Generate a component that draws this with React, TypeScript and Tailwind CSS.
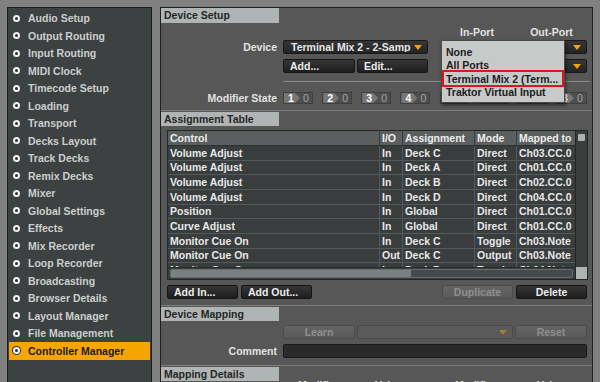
import React from "react";

const sideItems = [
  "Audio Setup",
  "Output Routing",
  "Input Routing",
  "MIDI Clock",
  "Timecode Setup",
  "Loading",
  "Transport",
  "Decks Layout",
  "Track Decks",
  "Remix Decks",
  "Mixer",
  "Global Settings",
  "Effects",
  "Mix Recorder",
  "Loop Recorder",
  "Broadcasting",
  "Browser Details",
  "Layout Manager",
  "File Management",
  "Controller Manager",
];

const rows = [
  ["Volume Adjust", "In", "Deck C", "Direct", "Ch03.CC.0"],
  ["Volume Adjust", "In", "Deck A", "Direct", "Ch01.CC.0"],
  ["Volume Adjust", "In", "Deck B", "Direct", "Ch02.CC.0"],
  ["Volume Adjust", "In", "Deck D", "Direct", "Ch04.CC.0"],
  ["Position", "In", "Global", "Direct", "Ch01.CC.0"],
  ["Curve Adjust", "In", "Global", "Direct", "Ch01.CC.0"],
  ["Monitor Cue On", "In", "Deck C", "Toggle", "Ch03.Note"],
  ["Monitor Cue On", "Out", "Deck C", "Output", "Ch03.Note"],
  ["Monitor Cue On", "In", "Deck D", "Toggle", "Ch04.Note"],
];

const colW = ["w-[212px]", "w-[23px]", "w-[72px]", "w-[42px]", "w-[58px]"];

function Tri({ dim }: { dim?: boolean }) {
  return (
    <svg width="8" height="5" viewBox="0 0 8 5" className="shrink-0">
      <polygon points="0,0 8,0 4,5" fill={dim ? "#a87a38" : "#f2a312"} />
    </svg>
  );
}

function Drop({ className, text, dim }: { className: string; text?: string; dim?: boolean }) {
  return (
    <div
      className={`${className} h-[14px] rounded-[2px] border flex items-center pl-[7px] pr-[5px] ${
        dim
          ? "border-[#4a4a4a] bg-[#5a5a5a] text-[#8e8e8e]"
          : "border-[#181818] bg-linear-to-b from-[#363636] to-[#242424] text-[#e6e6e6]"
      }`}
    >
      <span className="flex-1 mr-[3px] overflow-hidden whitespace-nowrap">{text}</span>
      <Tri dim={dim} />
    </div>
  );
}

function Btn({
  className,
  children,
  center,
  dim,
}: {
  className: string;
  children: React.ReactNode;
  center?: boolean;
  dim?: boolean;
}) {
  return (
    <div
      className={`${className} h-[14px] rounded-[2px] border flex items-center whitespace-nowrap ${
        center ? "justify-center" : "pl-[6px]"
      } ${
        dim
          ? "border-[#4b4b4b] bg-linear-to-b from-[#646464] to-[#5a5a5a] text-[#8f8f8f]"
          : "border-[#151515] bg-linear-to-b from-[#363636] to-[#1e1e1e] text-[#ececec]"
      }`}
    >
      {children}
    </div>
  );
}

function Tab({ label }: { label: string }) {
  return (
    <div className="h-[14px] flex relative">
      <div className="w-[118px] bg-[#b1b4b4] text-[#262626] flex items-center pl-[3px]">{label}</div>
    </div>
  );
}

function Row({
  label,
  children,
  className,
}: {
  label: string;
  children: React.ReactNode;
  className: string;
}) {
  return (
    <div className={`flex items-center ${className}`}>
      <div className="w-[116px] text-right text-[#e2e2e2]">{label}</div>
      <div className="ml-[6px] flex items-center">{children}</div>
    </div>
  );
}

function ModBox({ n }: { n: number }) {
  return (
    <div className="w-[30px] h-[12px] flex border border-[#3f3f3f] bg-[#4e4e4e]">
      <div className="w-[16px] bg-[#767676] text-white flex items-center pl-[4px] [clip-path:polygon(0_0,11px_0,16px_50%,11px_100%,0_100%)]">
        {n}
      </div>
      <div className="flex-1 flex items-center justify-center text-[#a2a2a2] font-normal">0</div>
    </div>
  );
}

function Sidebar() {
  return (
    <div className="w-[145px] h-[400px] shrink-0 border border-[#1b1c1c] bg-[#3e4141] pt-[1.5px] px-[1px]">
      {sideItems.map((s) => {
        const active = s === "Controller Manager";
        return (
          <div
            key={s}
            className={`h-[17.5px] flex items-center ${active ? "bg-[#f6a500] text-[#1c1c1c]" : "text-[#cbcece]"}`}
          >
            <span
              className={`ml-[4px] w-[7px] h-[7px] rounded-full flex items-center justify-center ${
                active ? "bg-[#f4f4f4] ring-1 ring-[#333]" : "bg-[#f0f0f0]"
              }`}
            >
              <span className="w-[3px] h-[3px] rounded-full bg-[#2e3131]" />
            </span>
            <span className="ml-[8px] whitespace-nowrap">{s}</span>
          </div>
        );
      })}
    </div>
  );
}

function Panel() {
  return (
    <div className="ml-[8px] w-[433px] h-[400px] shrink-0 border border-[#202020] bg-[#575757] relative">
      {/* Device Setup */}
      <div className="h-[102px]">
        <div className="h-[15px] flex">
          <div className="w-[118px] bg-[#b1b4b4] text-[#262626] flex items-center pl-[3px]">Device Setup</div>
        </div>
        <div className="mt-[3px] h-[12px] flex items-center text-[#e2e2e2]">
          <div className="ml-[280px] w-[72px] text-center">In-Port</div>
          <div className="ml-[3px] w-[71px] text-center">Out-Port</div>
        </div>
        <Row label="Device" className="mt-[2px] h-[14px]">
          <Drop className="w-[145px]" text="Terminal Mix 2 - 2-Samples" />
          <Drop className="ml-[13px] w-[72px]" text="" />
          <Drop className="ml-[3px] w-[71px]" text="" />
        </Row>
        <Row label="" className="mt-[5px] h-[14px]">
          <Btn className="w-[72px]">Add...</Btn>
          <Btn className="ml-[2px] w-[71px]">Edit...</Btn>
          <Drop className="ml-[13px] w-[72px]" text="" />
          <Drop className="ml-[3px] w-[71px]" text="" />
        </Row>
        <div className="mt-[8px] ml-[122px] w-[307px] h-[1px] bg-[#8a8a8a]" />
        <Row label="Modifier State" className="mt-[10px] h-[12px]">
          <div className="w-[304px] flex justify-between">
            {[1, 2, 3, 4, 5, 6, 7, 8].map((n) => (
              <ModBox key={n} n={n} />
            ))}
          </div>
        </Row>
      </div>

      {/* Assignment Table */}
      <div className="border-t border-[#7e7e7e]">
        <div className="mt-[1px]">
          <Tab label="Assignment Table" />
        </div>
        <div className="ml-[6px] mt-[4px] w-[421px] border border-[#242626] flex">
          <div className="w-[407px]">
            <div className="h-[15px] flex bg-[#5c5f5f] text-[#ededed] border-b border-[#2e3030]">
              {["Control", "I/O", "Assignment", "Mode", "Mapped to"].map((h, i) => (
                <div
                  key={h}
                  className={`${colW[i]} pl-[2px] flex items-center whitespace-nowrap overflow-hidden ${
                    i < 4 ? "border-r border-[#3a3c3c]" : ""
                  }`}
                >
                  {h}
                </div>
              ))}
            </div>
            <div className="h-[121px] overflow-hidden bg-[#3a3d3d]">
              {rows.map((r, ri) => (
                <div key={ri} className="h-[14.67px] flex border-b border-[#555959] text-[#e8e8e8]">
                  {r.map((c, i) => (
                    <div
                      key={i}
                      className={`${colW[i]} pl-[2px] flex items-center whitespace-nowrap overflow-hidden ${
                        i < 4 ? "border-r border-[#555959]" : ""
                      }`}
                    >
                      {c}
                    </div>
                  ))}
                </div>
              ))}
            </div>
            <div className="h-[12px] bg-[#3a3d3d] border-t border-[#2a2c2c] px-[2px] py-[1px]">
              <div className="h-full rounded-[2px] border border-[#6a6d6d] bg-[#474a4a]">
                <div className="w-[240px] h-full bg-[#7c7f7f]" />
              </div>
            </div>
          </div>
          <div className="w-[12px] border-l border-[#242626] flex flex-col">
            <div className="flex-1 bg-[#3a3d3d] pt-[3px] px-[2px]">
              <div className="h-[7px] bg-[#aeb1b1] rounded-[1px]" />
            </div>
            <div className="h-[12px] bg-[#b0b3b3]" />
          </div>
        </div>
        <div className="ml-[6px] mt-[5px] h-[14px] flex">
          <Btn className="w-[71px]">Add In...</Btn>
          <Btn className="ml-[3px] w-[71px]">Add Out...</Btn>
          <Btn className="ml-[130px] w-[71px]" center dim>
            Duplicate
          </Btn>
          <Btn className="ml-[3px] w-[71px]" center>
            Delete
          </Btn>
        </div>
      </div>

      {/* Device Mapping */}
      <div className="mt-[6px] border-t border-[#7e7e7e]">
        <div className="mt-[1px]">
          <Tab label="Device Mapping" />
        </div>
        <Row label="" className="mt-[4px] h-[14px]">
          <Btn className="w-[72px]" center dim>
            Learn
          </Btn>
          <Drop className="ml-[2px] w-[156px]" dim text="" />
          <Btn className="ml-[2px] w-[72px]" center dim>
            Reset
          </Btn>
        </Row>
        <Row label="Comment" className="mt-[5px] h-[14px]">
          <div className="w-[304px] h-[14px] rounded-[2px] border border-[#1a1a1a] bg-[#2a2a2a]" />
        </Row>
      </div>

      {/* Mapping Details */}
      <div className="mt-[7px] border-t border-[#7e7e7e]">
        <div className="mt-[1px] h-[30px] flex relative">
          <div className="w-[118px] h-[14px] bg-[#b1b4b4] text-[#262626] flex items-center pl-[3px]">
            Mapping Details
          </div>
          <div className="pt-[13px] flex text-[#e2e2e2] whitespace-nowrap">
            <span className="ml-[19px] w-[77px]">Modifier</span>
            <span className="w-[80px]">Value</span>
            <span className="w-[82px]">Modifier</span>
            <span>Value</span>
          </div>
        </div>
      </div>

      {/* Port popup */}
      <div className="absolute left-[280px] top-[32px] w-[124px] h-[63px] border border-[#4a4a4a] bg-[#c8c9c9] text-[#1c1c1c] pt-[4px] shadow-[1px_2px_3px_rgba(0,0,0,0.5)]">
        <div className="h-[13.5px] flex items-center pl-[4px]">None</div>
        <div className="h-[13.5px] flex items-center pl-[4px]">All Ports</div>
        <div className="h-[13.5px] flex items-center pl-[4px] relative whitespace-nowrap">
          Terminal Mix 2 (Term...
          <div className="absolute left-[0px] right-[0px] top-[-2px] bottom-[-1.5px] border-2 border-[#e3121b]" />
        </div>
        <div className="h-[13.5px] flex items-center pl-[4px] whitespace-nowrap">Traktor Virtual Input</div>
      </div>
    </div>
  );
}

export default function App() {
  return (
    <div className="w-[600px] h-[382px] overflow-hidden bg-[#808080] flex items-start pt-[7px] pl-[7px] font-['Liberation_Sans',Arial,sans-serif] font-bold text-[10.5px] leading-none">
      <Sidebar />
      <Panel />
    </div>
  );
}
